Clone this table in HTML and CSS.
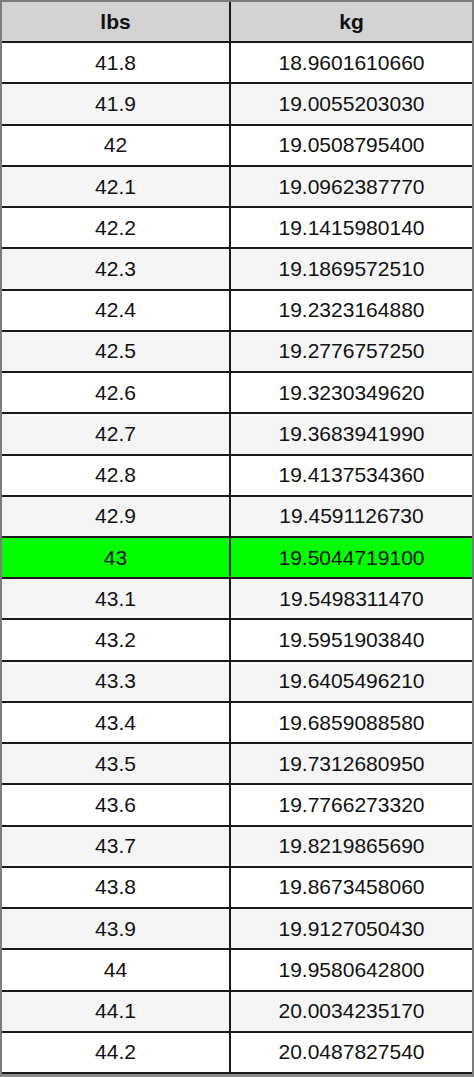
FILE: index.html
```html
<!DOCTYPE html>
<html>
<head>
<meta charset="utf-8">
<link rel="stylesheet" href="styles.css">
</head>
<body>
<div class="table">
  <div class="cell head">lbs</div><div class="cell head">kg</div>
  <div class="cell">41.8</div><div class="cell">18.9601610660</div>
  <div class="cell alt">41.9</div><div class="cell alt">19.0055203030</div>
  <div class="cell">42</div><div class="cell">19.0508795400</div>
  <div class="cell alt">42.1</div><div class="cell alt">19.0962387770</div>
  <div class="cell">42.2</div><div class="cell">19.1415980140</div>
  <div class="cell alt">42.3</div><div class="cell alt">19.1869572510</div>
  <div class="cell">42.4</div><div class="cell">19.2323164880</div>
  <div class="cell alt">42.5</div><div class="cell alt">19.2776757250</div>
  <div class="cell">42.6</div><div class="cell">19.3230349620</div>
  <div class="cell alt">42.7</div><div class="cell alt">19.3683941990</div>
  <div class="cell">42.8</div><div class="cell">19.4137534360</div>
  <div class="cell alt">42.9</div><div class="cell alt">19.4591126730</div>
  <div class="cell hl">43</div><div class="cell hl">19.5044719100</div>
  <div class="cell alt">43.1</div><div class="cell alt">19.5498311470</div>
  <div class="cell">43.2</div><div class="cell">19.5951903840</div>
  <div class="cell alt">43.3</div><div class="cell alt">19.6405496210</div>
  <div class="cell">43.4</div><div class="cell">19.6859088580</div>
  <div class="cell alt">43.5</div><div class="cell alt">19.7312680950</div>
  <div class="cell">43.6</div><div class="cell">19.7766273320</div>
  <div class="cell alt">43.7</div><div class="cell alt">19.8219865690</div>
  <div class="cell">43.8</div><div class="cell">19.8673458060</div>
  <div class="cell alt">43.9</div><div class="cell alt">19.9127050430</div>
  <div class="cell">44</div><div class="cell">19.9580642800</div>
  <div class="cell alt">44.1</div><div class="cell alt">20.0034235170</div>
  <div class="cell">44.2</div><div class="cell">20.0487827540</div>
</div>
</body>
</html>
```
FILE: styles.css
```css
html, body {
  margin: 0;
  padding: 0;
  background: #ffffff;
}
.table {
  box-sizing: border-box;
  width: 474px;
  height: 1077px;
  border-top: 2px solid #7c7c7c;
  border-left: 2px solid #7c7c7c;
  border-right: 2px solid #7c7c7c;
  border-bottom: 3px solid #8a8a8a;
  padding-bottom: 2px;
  background: #1a1a1a;
  display: grid;
  grid-template-columns: 227px 1fr;
  grid-template-rows: repeat(26, 1fr);
  column-gap: 2px;
  row-gap: 2px;
  font-family: "Liberation Sans", Arial, sans-serif;
  font-size: 21px;
  color: #111111;
}
.cell {
  background: #ffffff;
  display: flex;
  align-items: center;
  justify-content: center;
}
.alt {
  background: #f5f5f5;
}
.head {
  background: #d3d3d3;
  font-weight: bold;
}
.hl {
  background: #00ff00;
}
```
